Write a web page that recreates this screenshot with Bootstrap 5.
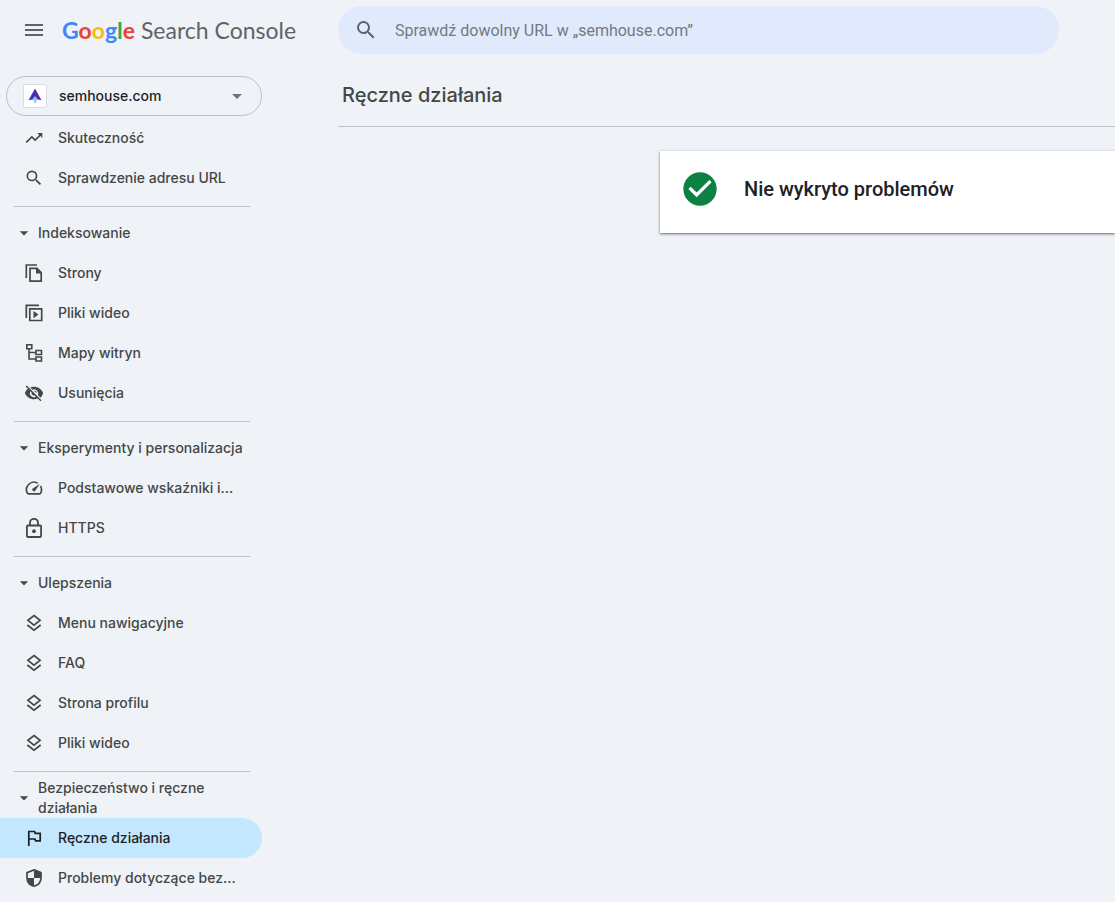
<!DOCTYPE html>
<html lang="pl">
<head>
<meta charset="utf-8">
<meta name="viewport" content="width=device-width, initial-scale=1">
<title>Ręczne działania – Search Console</title>
<link rel="stylesheet" href="https://cdn.jsdelivr.net/npm/bootstrap@5.3.0/dist/css/bootstrap.min.css">
<style>
  body { background: #eff3f8; color: #444746; font-family: Inter, "Liberation Sans", sans-serif; font-size: 14px; line-height: 20px; }
  svg { display: block; flex: none; fill: currentColor; }
  .gsc-side { width: 262px; }
  .gsc-main { padding-left: 76px; min-width: 0; }
  .gsc-top { height: 60px; padding: 0 0 0 22px; }
  .gsc-top button { color: #5f6368; }
  .gsc-logo { font-family: Lato, sans-serif; font-size: 23px; line-height: 28px; color: #5f6368; margin-left: 16px; }
  .gsc-logo b { font-weight: 700; }
  .g-blue { color: #4285f4; } .g-red { color: #ea4335; } .g-yellow { color: #fbbc04; } .g-green { color: #34a853; }
  .gsc-site { height: 40px; margin: 16px 0 2px 6px; padding: 0 12px 0 16px; border: 1px solid #bdc1c6; border-radius: 20px; background: none; color: #1f1f1f; width: 256px; }
  .gsc-site-icon { width: 24px; height: 24px; background: #fff; border: 1px solid #dadce0; border-radius: 2px; }
  .gsc-item { height: 40px; padding: 0 24px; gap: 14px; color: #444746; font-weight: 500; border-radius: 0 20px 20px 0; }
  .gsc-item.active { background: #c2e7ff; color: #1f1f1f; }
  .gsc-head { min-height: 40px; padding: 0 20px 0 14px; gap: 4px; color: #444746; font-size: 14px; line-height: 20px; font-weight: 500; width: 100%; }
  .gsc-rule { margin: 8px 12px 6px 14px; border-top: 1px solid #bfc2c7; opacity: 1; }
  .gsc-search { height: 48px; max-width: 721px; margin: 6px 0 0; padding: 0 16px; gap: 17px; border-radius: 24px; background: #e1eafc; color: #5f6368; font-family: Roboto, sans-serif; font-size: 16px; }
  .gsc-search input { color: #5f6368; outline: 0; min-width: 0; line-height: 24px; padding: 2px 0 0; }
  .gsc-search input::placeholder { color: #747980; opacity: 1; }
  .gsc-title { font-size: 20px; line-height: 24px; padding: 29px 4px 19px; border-bottom: 1px solid #bfc2c7; color: #444746; font-weight: 450; }
  .gsc-result { margin: 24px 0 0 322px; height: 82px; padding: 0 20px 6px; gap: 24px; background: #fff; color: #202124; font-family: Roboto, sans-serif; box-shadow: 0 1px 2px rgba(0,0,0,.45), 0 1px 4px rgba(0,0,0,.15); }
  .gsc-result h2 { font-size: 20px; line-height: 24px; font-weight: 500; }
</style>
</head>
<body>
<svg class="d-none" aria-hidden="true">
  <symbol id="i-search" viewBox="0 0 24 24"><path d="M15.5 14h-.79l-.28-.27A6.47 6.47 0 0 0 16 9.5 6.5 6.5 0 1 0 9.5 16c1.61 0 3.09-.59 4.23-1.57l.27.28v.79l5 4.99L20.49 19l-4.99-5zm-6 0a4.5 4.5 0 1 1 0-9 4.5 4.5 0 0 1 0 9z"/></symbol>
  <symbol id="i-down" viewBox="0 0 24 24"><path d="M7 10l5 5 5-5z"/></symbol>
  <symbol id="i-layers" viewBox="0 0 24 24"><path fill="none" stroke="currentColor" stroke-width="2" d="M12 3l7.300 5.800L12 14.500 4.700 8.800zM4 14.400l8 6.300 8-6.300"/></symbol>
</svg>
<div class="d-flex">
  <aside class="gsc-side flex-shrink-0">
    <header class="gsc-top d-flex align-items-center">
      <button class="btn p-0 border-0" type="button" aria-label="Menu główne"><svg width="24" height="24" viewBox="0 0 24 24"><path d="M3 18h18v-2H3zm0-5h18v-2H3zm0-7v2h18V6z"/></svg></button>
      <a href="#" class="gsc-logo text-decoration-none text-nowrap"><b><span class="g-blue">G</span><span class="g-red">o</span><span class="g-yellow">o</span><span class="g-blue">g</span><span class="g-green">l</span><span class="g-red">e</span></b> Search Console</a>
    </header>
    <button class="gsc-site d-flex align-items-center fw-medium" type="button">
      <span class="gsc-site-icon d-flex align-items-center justify-content-center"><svg width="16" height="16" viewBox="0 0 16 16"><path fill="#3f2fb5" d="M8 .5L1.500 12.200 8 11z"/><path fill="#6a1fa8" d="M8 .5l6.500 11.700L8 11z"/><path fill="#7fd3fa" d="M8 8l2.300 3L8 16l-2.300-5z"/></svg></span>
      <span class="ms-2 ps-1 flex-grow-1 text-start">semhouse.com</span>
      <svg width="24" height="24" class="text-secondary"><use href="#i-down"/></svg>
    </button>
    <nav aria-label="Raporty">
      <a href="#" class="gsc-item d-flex align-items-center text-decoration-none"><svg width="20" height="20" viewBox="0 0 24 24"><path d="M16 6l2.290 2.290-4.880 4.880-4-4L2 16.590 3.410 18l6-6 4 4 6.300-6.290L22 12V6z"/></svg><span>Skuteczność</span></a>
      <a href="#" class="gsc-item d-flex align-items-center text-decoration-none"><svg width="20" height="20"><use href="#i-search"/></svg><span>Sprawdzenie adresu URL</span></a>
      <hr class="gsc-rule">
      <button type="button" class="gsc-head btn border-0 rounded-0 text-start d-flex align-items-center" aria-expanded="true"><svg width="20" height="20"><use href="#i-down"/></svg><span>Indeksowanie</span></button>
      <a href="#" class="gsc-item d-flex align-items-center text-decoration-none"><svg width="20" height="20" viewBox="0 0 20 20"><path fill="none" stroke="currentColor" stroke-width="1.700" d="M2.300 15V2H13M6 5.300h7l4.200 4.200v8.700H6z"/><path d="M12 5v5.500h5.500z"/></svg><span>Strony</span></a>
      <a href="#" class="gsc-item d-flex align-items-center text-decoration-none"><svg width="20" height="20" viewBox="0 0 20 20"><path fill="none" stroke="currentColor" stroke-width="1.700" d="M2.300 15V2.300H15M5.800 5.800h11.900v11.700H5.800z"/><path d="M9.500 8v7.200l5-3.600z"/></svg><span>Pliki wideo</span></a>
      <a href="#" class="gsc-item d-flex align-items-center text-decoration-none"><svg width="20" height="20" viewBox="0 0 20 20"><path fill="none" stroke="currentColor" stroke-width="1.600" d="M2.800 1.800h5v4h-5zM12 7.500h5.500v4H12zM12 14h5.500v4H12zM5 6v10h7M5 9.500h7"/></svg><span>Mapy witryn</span></a>
      <a href="#" class="gsc-item d-flex align-items-center text-decoration-none"><svg width="20" height="20" viewBox="0 0 24 24"><path d="M12 4.500c-1.600 0-3.100.3-4.500.9l2.600 2.600A5 5 0 0 1 16.600 14.400l3.200 3.200A12 12 0 0 0 23 12C21.300 7.600 17 4.500 12 4.500zM2 4.300l2.700 2.700A11.800 11.800 0 0 0 1 12c1.700 4.400 6 7.500 11 7.500 1.600 0 3-.3 4.400-.8l3.300 3.300L21 20.700 3.300 3zM7.500 9.800l1.600 1.600A3 3 0 0 0 12.700 15l1.500 1.500A5 5 0 0 1 7.500 9.800zM11.800 9l3.200 3.200A3 3 0 0 0 11.800 9z"/></svg><span>Usunięcia</span></a>
      <hr class="gsc-rule">
      <button type="button" class="gsc-head btn border-0 rounded-0 text-start d-flex align-items-center" aria-expanded="true"><svg width="20" height="20"><use href="#i-down"/></svg><span class="text-nowrap">Eksperymenty i personalizacja</span></button>
      <a href="#" class="gsc-item d-flex align-items-center text-decoration-none"><svg width="20" height="20" viewBox="0 0 24 24"><path d="M20.380 8.570l-1.230 1.850a8 8 0 0 1-.22 7.580H5.070A8 8 0 0 1 15.580 6.850l1.850-1.230A10 10 0 0 0 3.350 19a2 2 0 0 0 1.720 1h13.850a2 2 0 0 0 1.740-1 10 10 0 0 0-.27-10.440zM10.590 15.410a2 2 0 0 0 2.830 0l5.660-8.490-8.490 5.660a2 2 0 0 0 0 2.830z"/></svg><span>Podstawowe wskaźniki i...</span></a>
      <a href="#" class="gsc-item d-flex align-items-center text-decoration-none"><svg width="20" height="20" viewBox="0 0 20 20"><path fill="none" stroke="currentColor" stroke-width="1.800" d="M4 7.500h12a1.100 1.100 0 0 1 1.100 1.100v9.300A1.100 1.100 0 0 1 16 19H4a1.100 1.100 0 0 1-1.100-1.100V8.600A1.100 1.100 0 0 1 4 7.500zM6 7V4.800a4 4 0 0 1 8 0V7"/><circle cx="10" cy="13.200" r="1.900"/></svg><span>HTTPS</span></a>
      <hr class="gsc-rule">
      <button type="button" class="gsc-head btn border-0 rounded-0 text-start d-flex align-items-center" aria-expanded="true"><svg width="20" height="20"><use href="#i-down"/></svg><span>Ulepszenia</span></button>
      <a href="#" class="gsc-item d-flex align-items-center text-decoration-none"><svg width="20" height="20"><use href="#i-layers"/></svg><span>Menu nawigacyjne</span></a>
      <a href="#" class="gsc-item d-flex align-items-center text-decoration-none"><svg width="20" height="20"><use href="#i-layers"/></svg><span>FAQ</span></a>
      <a href="#" class="gsc-item d-flex align-items-center text-decoration-none"><svg width="20" height="20"><use href="#i-layers"/></svg><span>Strona profilu</span></a>
      <a href="#" class="gsc-item d-flex align-items-center text-decoration-none"><svg width="20" height="20"><use href="#i-layers"/></svg><span>Pliki wideo</span></a>
      <hr class="gsc-rule">
      <button type="button" class="gsc-head btn border-0 rounded-0 text-start d-flex align-items-center" aria-expanded="true"><svg width="20" height="20"><use href="#i-down"/></svg><span>Bezpieczeństwo i ręczne działania</span></button>
      <a href="#" class="gsc-item active d-flex align-items-center text-decoration-none" aria-current="page"><svg width="20" height="20" viewBox="0 0 20 20"><path fill="none" stroke="currentColor" stroke-width="1.700" d="M4.800 18V3.500h5.800l.6 1.800h5v7.500h-4.600l-.6-1.800H4.800"/></svg><span>Ręczne działania</span></a>
      <a href="#" class="gsc-item d-flex align-items-center text-decoration-none"><svg width="20" height="20" viewBox="0 0 20 20"><path fill="none" stroke="currentColor" stroke-width="1.700" d="M10 1.900l7 2.700v5.200c0 4-2.800 7.400-7 8.500-4.200-1.100-7-4.500-7-8.500V4.600z"/><path d="M10 1.500v8.500h7V4.600zM10 10H3c.2 4 3 7.300 7 8.300z"/></svg><span>Problemy dotyczące bez...</span></a>
    </nav>
  </aside>
  <main class="gsc-main flex-grow-1">
    <form class="gsc-search d-flex align-items-center" role="search">
      <svg width="24" height="24"><use href="#i-search"/></svg>
      <input type="search" class="border-0 bg-transparent flex-grow-1" aria-label="Sprawdź dowolny URL" placeholder="Sprawdź dowolny URL w „semhouse.com”">
    </form>
    <h1 class="gsc-title mb-0">Ręczne działania</h1>
    <section class="gsc-result d-flex align-items-center">
      <svg width="40" height="40" viewBox="0 0 24 24"><circle cx="12" cy="12" r="10" fill="#0d8043"/><path fill="#fff" d="M10 17l-5-5 1.410-1.410L10 14.170l7.590-7.590L19 8z"/></svg>
      <h2 class="mb-0">Nie wykryto problemów</h2>
    </section>
  </main>
</div>
<script src="https://cdn.jsdelivr.net/npm/bootstrap@5.3.0/dist/js/bootstrap.bundle.min.js"></script>
</body>
</html>
